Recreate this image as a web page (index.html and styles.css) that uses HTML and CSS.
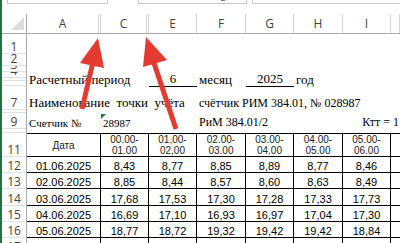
FILE: index.html
```html
<!DOCTYPE html>
<html lang="ru">

<head>
    <meta charset="UTF-8">
    <meta name="viewport" content="width=device-width, initial-scale=1.0">
    <title>Счетчик — почасовые показания</title>
    <link rel="stylesheet" href="styles.css">
</head>

<body>
    <div class="excel">
        <!-- formula bar remains -->
        <div class="toolbar">
            <div class="box box-name"></div>
            <div class="box box-func"><span class="caret"></span></div>
            <div class="box box-formula"></div>
        </div>

        <!-- column letters -->
        <div class="colheads">
            <div class="corner">
                <svg width="14" height="14" viewBox="0 0 14 14">
                    <polygon points="0,13 13,13 13,0" fill="#dcdcdc" />
                </svg>
            </div>
            <div class="ch hid">A</div>
            <div class="ch hid">C</div>
            <div class="ch">E</div>
            <div class="ch">F</div>
            <div class="ch">G</div>
            <div class="ch">H</div>
            <div class="ch">I</div>
            <div class="ch"></div>
        </div>

        <div class="body">
            <div class="rowheads">
                <div class="rh h20">1</div>
                <div class="rh h12">2</div>
                <div class="rh h6">3</div>
                <div class="rh h6">4</div>
                <div class="rh h3"></div>
                <div class="rh h5"></div>
                <div class="rh h24">7</div>
                <div class="rh h3"></div>
                <div class="rh h16">9</div>
                <div class="rh h4"></div>
                <div class="rh h24">11</div>
                <div class="rh h16">12</div>
                <div class="rh h16">13</div>
                <div class="rh h17">14</div>
                <div class="rh h16">15</div>
                <div class="rh h16">16</div>
                <div class="rh h16">17</div>
            </div>

            <div class="sheet">
                <div class="line period">
                    <div class="c">Расчетный период</div>
                    <div class="c"></div>
                    <div class="c uline">6</div>
                    <div class="c">месяц</div>
                    <div class="c uline">2025</div>
                    <div class="c">год</div>
                </div>

                <div class="line name">
                    <div class="c">Наименование&nbsp; точки&nbsp; учёта</div>
                    <div class="c"></div>
                    <div class="c"></div>
                    <div class="c small">счётчик РИМ 384.01, № 028987</div>
                </div>

                <div class="line meter">
                    <div class="c tiny">Счетчик №</div>
                    <div class="c tiny note">28987</div>
                    <div class="c"></div>
                    <div class="c small">РиМ 384.01/2</div>
                    <div class="c"></div>
                    <div class="c"></div>
                    <div class="c small right">Ктт =</div>
                    <div class="c small">1</div>
                </div>

                <div class="tbl">
                    <div class="tr head">
                        <div class="td">Дата</div>
                        <div class="td">00.00-<br>01.00</div>
                        <div class="td">01,00-<br>02,00</div>
                        <div class="td">02.00-<br>03.00</div>
                        <div class="td">03.00-<br>04.00</div>
                        <div class="td">04.00-<br>05.00</div>
                        <div class="td">05.00-<br>06.00</div>
                        <div class="td last"></div>
                    </div>
                    <div class="tr h16">
                        <div class="td">01.06.2025</div>
                        <div class="td">8,43</div>
                        <div class="td">8,77</div>
                        <div class="td">8,85</div>
                        <div class="td">8,89</div>
                        <div class="td">8,77</div>
                        <div class="td">8,46</div>
                        <div class="td last"></div>
                    </div>
                    <div class="tr h16">
                        <div class="td">02.06.2025</div>
                        <div class="td">8,85</div>
                        <div class="td">8,44</div>
                        <div class="td">8,57</div>
                        <div class="td">8,60</div>
                        <div class="td">8,63</div>
                        <div class="td">8,49</div>
                        <div class="td last"></div>
                    </div>
                    <div class="tr h17">
                        <div class="td">03.06.2025</div>
                        <div class="td">17,68</div>
                        <div class="td">17,53</div>
                        <div class="td">17,30</div>
                        <div class="td">17,28</div>
                        <div class="td">17,33</div>
                        <div class="td">17,73</div>
                        <div class="td last"></div>
                    </div>
                    <div class="tr h16">
                        <div class="td">04.06.2025</div>
                        <div class="td">16,69</div>
                        <div class="td">17,10</div>
                        <div class="td">16,93</div>
                        <div class="td">16,97</div>
                        <div class="td">17,04</div>
                        <div class="td">17,30</div>
                        <div class="td last"></div>
                    </div>
                    <div class="tr h16">
                        <div class="td">05.06.2025</div>
                        <div class="td">18,77</div>
                        <div class="td">18,72</div>
                        <div class="td">19,32</div>
                        <div class="td">19,42</div>
                        <div class="td">19,42</div>
                        <div class="td">18,84</div>
                        <div class="td last"></div>
                    </div>
                    <div class="tr h16">
                        <div class="td"></div>
                        <div class="td"></div>
                        <div class="td"></div>
                        <div class="td"></div>
                        <div class="td"></div>
                        <div class="td"></div>
                        <div class="td"></div>
                        <div class="td last"></div>
                    </div>
                </div>
            </div>
        </div>

        <!-- red annotation arrows drawn over the sheet -->
        <svg class="arrows" width="400" height="243" viewBox="0 0 400 243">
            <line x1="82" y1="109" x2="93" y2="62" stroke="#e33b31" stroke-width="5" />
            <polygon points="98,38 104,68 80,63" fill="#e33b31" />
            <line x1="176" y1="129" x2="153" y2="60" stroke="#e33b31" stroke-width="5" />
            <polygon points="146,37 167,60 143,67" fill="#e33b31" />
        </svg>
    </div>
</body>

</html>
```

FILE: styles.css
```css
* {
    margin: 0;
    padding: 0;
    box-sizing: border-box;
}

body {
    width: 400px;
    height: 243px;
    overflow: hidden;
    background-color: #fff;
    font-family: 'Liberation Serif', 'Times New Roman', serif;
    color: #000;
}

.excel {
    position: relative;
    width: 400px;
    height: 243px;
    overflow: hidden;
    border-left: 2px solid #217346;
}

/* top strip */
.toolbar {
    height: 14px;
    display: flex;
    align-items: flex-start;
}

.box {
    height: 4px;
    border: 1px solid #c6c6c6;
    border-top: none;
    background-color: #fff;
}

.box-name {
    margin-left: 5px;
    width: 101px;
}

.box-func {
    position: relative;
    margin-left: 30px;
    width: 109px;
}

.box-formula {
    margin-left: 5px;
    flex: 1;
    margin-right: -4px;
}

.caret {
    position: absolute;
    left: 82px;
    top: 0;
    width: 4px;
    height: 1px;
    background-color: #777;
}

/* column headers */
.colheads {
    display: grid;
    grid-template-columns: 25px 74px 48px 48px 49px 48px 49px 48px 1fr;
    height: 20px;
    border-bottom: 1px solid #ababab;
}

.corner {
    border-right: 1px solid #ababab;
    display: flex;
    align-items: flex-end;
    justify-content: flex-end;
    padding: 0 1px 2px 0;
}

.corner svg {
    display: block;
}

.ch {
    border-right: 1px solid #d4d4d4;
    display: flex;
    align-items: center;
    justify-content: center;
    font-family: 'Open Sans', 'Noto Sans', sans-serif;
    font-size: 12px;
    color: #444;
}

.ch.hid {
    border-right: 3px double #d4d4d4;
}

/* body */
.body {
    display: flex;
}

.rowheads {
    width: 25px;
    flex: none;
    border-right: 1px solid #ababab;
}

.rh {
    display: flex;
    align-items: flex-end;
    justify-content: center;
    overflow: hidden;
    border-bottom: 1px solid #e1e1e1;
    font-family: 'Open Sans', 'Noto Sans', sans-serif;
    font-size: 12px;
    line-height: 12px;
    color: #444;
}

.h3 { height: 3px; }
.h4 { height: 4px; }
.h5 { height: 5px; }
.h6 { height: 6px; }
.h12 { height: 12px; }
.h16 { height: 16px; }
.h17 { height: 17px; }
.h20 { height: 20px; }
.h24 { height: 24px; }

.sheet {
    flex: 1;
}

.line,
.tr {
    display: grid;
    grid-template-columns: 74px 48px 48px 49px 48px 49px 48px 1fr;
}

.period {
    margin-top: 38px;
    height: 14px;
}

.name {
    height: 24px;
}

.meter {
    margin-top: 3px;
    height: 16px;
}

.c {
    display: flex;
    align-items: flex-end;
    padding-left: 2px;
    white-space: nowrap;
    font-size: 13px;
    line-height: 14px;
}

.c.small {
    font-size: 12px;
}

.c.tiny {
    font-size: 11px;
    line-height: 12px;
}

.c.right {
    justify-content: flex-end;
    padding: 0 1px 0 0;
}

.c.uline {
    justify-content: center;
    padding-left: 0;
    border-bottom: 1px solid #000;
}

.note {
    position: relative;
}

.note::before {
    content: '';
    position: absolute;
    left: 0;
    top: 1px;
    border-top: 5px solid #1e7b3e;
    border-right: 5px solid transparent;
}

/* data table */
.tbl {
    margin-top: 4px;
}

.td {
    display: flex;
    align-items: flex-end;
    justify-content: center;
    text-align: center;
    border-right: 1px solid #000;
    border-bottom: 1px solid #000;
    font-family: 'Liberation Sans', Arial, sans-serif;
    font-size: 11px;
    line-height: 12px;
    white-space: nowrap;
}

.td.last {
    border-right: none;
}

.tr.head {
    height: 24px;
}

.tr.head .td {
    align-items: center;
    border-top: 1px solid #000;
    font-size: 10px;
    line-height: 11px;
    color: #222;
}

.arrows {
    position: absolute;
    top: 0;
    left: -2px;
    pointer-events: none;
}
```
